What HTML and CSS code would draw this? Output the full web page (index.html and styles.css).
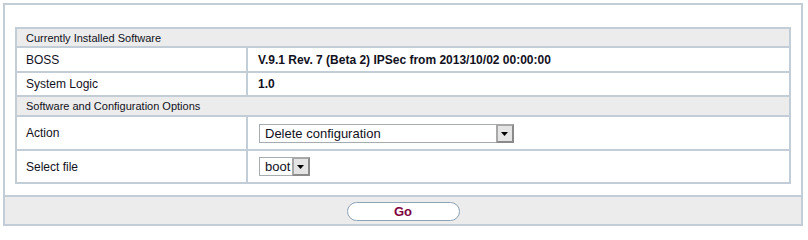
FILE: index.html
```html
<!DOCTYPE html>
<html>
<head>
<meta charset="utf-8">
<link rel="stylesheet" href="styles.css">
</head>
<body>
<div class="frame">
  <div class="content">
    <div class="grid">
      <div class="head">Currently Installed Software</div>
      <div class="cell label r1">BOSS</div>
      <div class="cell value r1">V.9.1 Rev. 7 (Beta 2) IPSec from 2013/10/02 00:00:00</div>
      <div class="cell label r2">System Logic</div>
      <div class="cell value r2">1.0</div>
      <div class="head h2">Software and Configuration Options</div>
      <div class="cell label r3">Action</div>
      <div class="cell ctrl r3">
        <span class="select wide"><span class="stext">Delete configuration</span><span class="sbtn"><svg width="8" height="5" viewBox="0 0 8 5"><path d="M0 0H7L3.5 4Z" fill="#000"/></svg></span></span>
      </div>
      <div class="cell label r4">Select file</div>
      <div class="cell ctrl r4">
        <span class="select narrow"><span class="stext">boot</span><span class="sbtn"><svg width="8" height="5" viewBox="0 0 8 5"><path d="M0 0H7L3.5 4Z" fill="#000"/></svg></span></span>
      </div>
    </div>
  </div>
  <div class="footer">
    <button class="go">Go</button>
  </div>
</div>
</body>
</html>
```
FILE: styles.css
```css
html, body {
  margin: 0;
  padding: 0;
  background: #ffffff;
}
body {
  font-family: "Liberation Sans", Arial, sans-serif;
  color: #111122;
}
.frame {
  margin: 3px 0 0 3px;
  width: 796px;
  border: 2px solid #c2cdd8;
  background: #ffffff;
}
.content {
  padding: 22px 10px 11px 10px;
}
.grid {
  display: grid;
  grid-template-columns: 229px 541px;
  grid-template-rows: 17px 23px 22px 18px 32px 31px;
  gap: 2px;
  padding: 2px;
  background: #c2cdd8;
}
.head {
  grid-column: 1 / 3;
  background: #ececec;
  font-size: 11px;
  padding-left: 9px;
  display: flex;
  align-items: center;
}
.cell {
  background: #ffffff;
  display: flex;
  align-items: center;
  font-size: 12px;
}
.label {
  padding-left: 9px;
}
.value {
  padding-left: 10px;
  font-weight: bold;
}
.ctrl {
  padding-left: 11px;
}
.r3 .select { margin-top: 1px; }
.r4 .select { margin-top: 0; }
.select {
  display: flex;
  align-items: stretch;
  height: 19px;
  box-sizing: border-box;
  border: 1px solid #a5acb2;
  background: #ffffff;
  position: relative;
}
.select.wide { width: 255px; }
.select.narrow { width: 51px; }
.stext {
  flex: 1;
  display: flex;
  align-items: center;
  padding-left: 5px;
  font-size: 13px;
  color: #111122;
}
.sbtn {
  width: 18px;
  margin: -1px -1px -1px 0;
  box-sizing: border-box;
  border: 2px solid #8a8a8a;
  border-top-color: #a8a8a8;
  border-left-color: #a8a8a8;
  background: #e4e4e4;
  display: flex;
  align-items: center;
  justify-content: center;
}
.sbtn svg { display: block; margin-top: 1px; }
.footer {
  border-top: 2px solid #c2cdd8;
  background: #ececec;
  height: 27px;
  display: flex;
  justify-content: center;
  align-items: flex-start;
}
.go {
  margin-top: 5px;
  width: 113px;
  height: 19px;
  border: 1px solid #8ea3b8;
  border-radius: 10px;
  background: #ffffff;
  font-family: "Liberation Sans", Arial, sans-serif;
  font-weight: bold;
  font-size: 13px;
  color: #800040;
  padding: 0;
  line-height: 17px;
}
```
